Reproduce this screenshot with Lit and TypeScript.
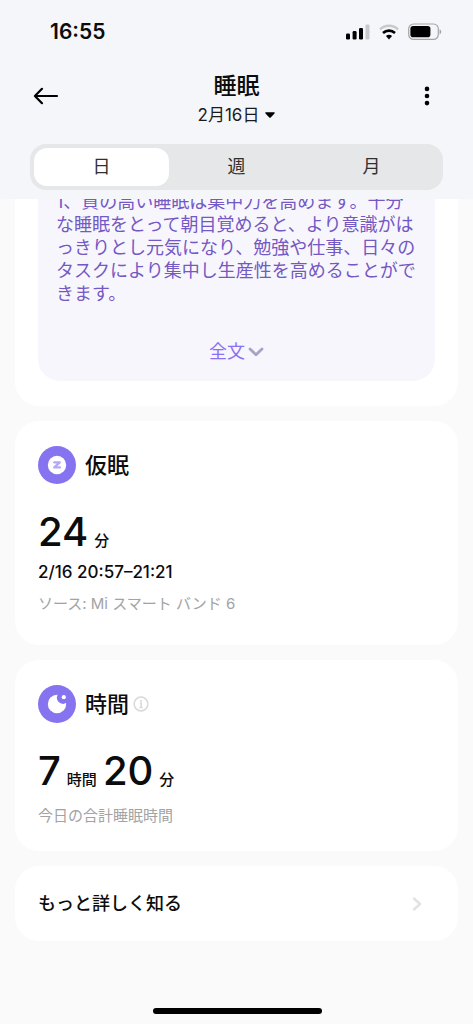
import { LitElement, html, css, svg } from "lit";
import { customElement, state } from "lit/decorators.js";

const TABS = ["日", "週", "月"];

@customElement("app-root")
export class AppRoot extends LitElement {
  @state() private active = 0;

  static styles = css`
    :host {
      display: flex;
      flex-direction: column;
      min-height: 100vh;
      background: #fafafa;
      color: #0c0c0d;
      font-family: Inter, "Noto Sans CJK JP", sans-serif;
      -webkit-font-smoothing: antialiased;
    }
    * {
      box-sizing: border-box;
    }
    button {
      border: 0;
      padding: 0;
      margin: 0;
      background: none;
      color: inherit;
      font: inherit;
      cursor: pointer;
    }
    svg {
      display: block;
    }
    h1,
    h2,
    p {
      margin: 0;
    }
    .header {
      position: sticky;
      top: 0;
      z-index: 1;
      background: #f5f6f9;
      padding-bottom: 9px;
    }
    .status {
      display: flex;
      align-items: center;
      justify-content: space-between;
      height: 64px;
      padding: 0 31px 0 50px;
    }
    .time {
      font-size: 21px;
      line-height: 24px;
      font-weight: 600;
    }
    .signals {
      display: flex;
      align-items: center;
      gap: 9px;
    }
    .bar {
      display: grid;
      grid-template-columns: 32px 1fr 32px;
      align-items: center;
      height: 64px;
      padding: 0 30px;
    }
    .icon {
      display: grid;
      place-items: center;
      height: 32px;
    }
    .heading {
      display: flex;
      flex-direction: column;
      align-items: center;
      padding-top: 5px;
    }
    .title {
      font-size: 23px;
      line-height: 32px;
      font-weight: 500;
    }
    .date {
      display: flex;
      align-items: center;
      gap: 6px;
      font-size: 17px;
      line-height: 26px;
      color: #1b1b1c;
    }
    .tabs {
      display: grid;
      grid-template-columns: repeat(3, 1fr);
      height: 46px;
      margin: 16px 30px 0;
      padding: 4px;
      border-radius: 16px;
      background: #e6e7e8;
    }
    .tab {
      border-radius: 13px;
      font-size: 18px;
      line-height: 24px;
      color: #303031;
    }
    .tab.on {
      background: #fff;
    }
    .main {
      display: flex;
      flex-direction: column;
      gap: 15px;
      margin-top: -9px;
      padding: 0 15px 84px;
    }
    .card {
      border-radius: 24px;
      background: #fff;
      padding: 23px;
    }
    .card.first {
      padding-top: 0;
      padding-bottom: 25px;
      border-top-left-radius: 0;
      border-top-right-radius: 0;
    }
    .advice {
      display: flex;
      flex-direction: column;
      align-items: center;
      gap: 35px;
      padding: 0 18px 17px;
      border-radius: 0 0 22px 22px;
      background: #f7f6fd;
    }
    .text {
      align-self: stretch;
      font-size: 18px;
      line-height: 23px;
      color: #7458c4;
    }
    .more {
      display: flex;
      align-items: center;
      gap: 3px;
      font-size: 18px;
      line-height: 24px;
      color: #8b6ff5;
    }
    .name {
      display: flex;
      align-items: center;
      gap: 9px;
      height: 38px;
      margin-top: 2px;
    }
    .label {
      display: flex;
      align-items: center;
      gap: 4px;
    }
    .label h2 {
      font-size: 22px;
      line-height: 32px;
      font-weight: 500;
    }
    .value {
      display: flex;
      align-items: baseline;
      gap: 6px;
      margin-top: 27px;
    }
    .number {
      font-size: 40px;
      line-height: 42px;
      font-weight: 500;
    }
    .unit {
      font-size: 15px;
      line-height: 20px;
      font-weight: 500;
    }
    .range {
      margin-top: 7px;
      font-size: 17px;
      line-height: 24px;
      font-weight: 500;
    }
    .note {
      margin-top: 8px;
      font-size: 15px;
      line-height: 24px;
      color: #a3a3a4;
    }
    .value + .note {
      margin-top: 12px;
    }
    .nap {
      padding-bottom: 29px;
    }
    .link {
      display: flex;
      align-items: center;
      justify-content: space-between;
      padding: 25px 35px 25px 23px;
      font-size: 18px;
      line-height: 25px;
      font-weight: 500;
      color: inherit;
      text-decoration: none;
    }
    .home {
      position: fixed;
      left: 50%;
      bottom: 10px;
      z-index: 2;
      width: 169px;
      height: 6px;
      margin-left: -84px;
      border-radius: 3px;
      background: #000;
    }
  `;

  private signals() {
    return html`<div class="signals">
      <svg width="24" height="16" viewBox="0 0 24 16" aria-hidden="true">
        <rect x="0" y="9.5" width="4" height="6" rx="1.3" />
        <rect x="6.6" y="7" width="4" height="8.5" rx="1.3" />
        <rect x="13" y="4" width="4" height="11.5" rx="1.3" />
        <rect x="19.5" y="0.5" width="4" height="15" rx="1.3" fill="#c8c9cb" />
      </svg>
      <svg width="20" height="16" viewBox="0 0 20 16" fill="none" stroke-width="2.6" aria-hidden="true">
        <path d="M1 5.4a13 13 0 0 1 18 0" stroke="#c8c9cb" />
        <path d="M4 9a8.8 8.8 0 0 1 12 0" stroke="#000" />
        <path d="M10 15.4 6.9 12.1a4.6 4.6 0 0 1 6.2 0z" fill="#000" />
      </svg>
      <svg width="34" height="18" viewBox="0 0 34 18" aria-hidden="true">
        <rect x="0.7" y="1" width="29.6" height="15.4" rx="4.8" fill="none" stroke="#a4a5a7" stroke-width="1.2" />
        <rect x="2.4" y="3" width="20" height="11.2" rx="2.8" />
        <path d="M31.6 6.2v5.2c1-.4 1.7-1.4 1.7-2.6s-.7-2.2-1.7-2.6z" fill="#a4a5a7" />
      </svg>
    </div>`;
  }

  private badge(shape: unknown) {
    return html`<svg width="38" height="38" viewBox="0 0 38 38" aria-hidden="true">
      <circle cx="19" cy="19" r="19" fill="#8573f0" />
      ${shape}
    </svg>`;
  }

  render() {
    return html`
      <header class="header">
        <div class="status">
          <span class="time">16:55</span>
          ${this.signals()}
        </div>
        <div class="bar">
          <button class="icon" aria-label="戻る">
            <svg width="26" height="18" viewBox="0 0 26 18" fill="none" stroke="#000" stroke-width="2.2" stroke-linecap="round" stroke-linejoin="round">
              <path d="M24 9H2M9 1.8 1.9 9 9 16.2" />
            </svg>
          </button>
          <div class="heading">
            <h1 class="title">睡眠</h1>
            <button class="date">
              <span>2月16日</span>
              <svg width="10" height="6" viewBox="0 0 10 6" aria-hidden="true">
                <path d="M1 .3h8c.7 0 1 .7.5 1.2L5.7 5.5c-.4.4-1 .4-1.4 0L.5 1.5C0 1 .3.3 1 .3z" />
              </svg>
            </button>
          </div>
          <button class="icon" aria-label="メニュー">
            <svg width="6" height="20" viewBox="0 0 6 20">
              <circle cx="3" cy="2.9" r="2.3" />
              <circle cx="3" cy="10" r="2.3" />
              <circle cx="3" cy="17.1" r="2.3" />
            </svg>
          </button>
        </div>
        <div class="tabs" role="tablist">
          ${TABS.map(
            (t, i) => html`<button
              class="tab ${i === this.active ? "on" : ""}"
              role="tab"
              aria-selected=${i === this.active}
              @click=${() => (this.active = i)}
            >${t}</button>`
          )}
        </div>
      </header>
      <main class="main">
        <section class="card first">
          <div class="advice">
            <p class="text">1、質の高い睡眠は集中力を高めます。十分な睡眠をとって朝目覚めると、より意識がはっきりとし元気になり、勉強や仕事、日々のタスクにより集中し生産性を高めることができます。</p>
            <button class="more">
              <span>全文</span>
              <svg width="16" height="10" viewBox="0 0 16 10" fill="none" stroke="#a9a2c4" stroke-width="2.8" stroke-linecap="round" stroke-linejoin="round" aria-hidden="true">
                <path d="M2 2l6 5.800L14 2" />
              </svg>
            </button>
          </div>
        </section>
        <section class="card nap">
          <div class="name">
            ${this.badge(svg`
              <circle cx="19" cy="19" r="9.2" fill="#fff"/>
              <path d="M16.200 16.400h5.600l-5.600 5h5.800" fill="none" stroke="#b5a8f8" stroke-width="2.2" stroke-linecap="round" stroke-linejoin="round"/>`)}
            <div class="label"><h2>仮眠</h2></div>
          </div>
          <p class="value"><span class="number">24</span><span class="unit">分</span></p>
          <p class="range">2/16 20:57–21:21</p>
          <p class="note">ソース: Mi スマート バンド 6</p>
        </section>
        <section class="card">
          <div class="name">
            ${this.badge(svg`
              <circle cx="19" cy="19" r="9.2" fill="#fff"/>
              <circle cx="25" cy="12.7" r="6.2" fill="#8573f0"/>
              <circle cx="25.8" cy="12.2" r="2.1" fill="#fff"/>`)}
            <div class="label">
              <h2>時間</h2>
              <button aria-label="情報">
                <svg width="16" height="16" viewBox="0 0 16 16" fill="none" stroke="#d9d9d9" stroke-width="1.5">
                  <circle cx="8" cy="8" r="6.9" />
                  <path d="M6.8 7.3H8.2V11.5M6.4 11.500h3.400" />
                  <circle cx="8" cy="4.9" r="1" fill="#d9d9d9" stroke="none" />
                </svg>
              </button>
            </div>
          </div>
          <p class="value">
            <span class="number">7</span><span class="unit">時間</span><span class="number">20</span><span class="unit">分</span>
          </p>
          <p class="note">今日の合計睡眠時間</p>
        </section>
        <a class="card link" href="#">
          <span>もっと詳しく知る</span>
          <svg width="12" height="16" viewBox="0 0 12 16" fill="none" stroke="#e2e2e2" stroke-width="2.4" stroke-linecap="round" stroke-linejoin="round" aria-hidden="true">
            <path d="M3 2.500l6 5.500-6 5.500" />
          </svg>
        </a>
      </main>
      <div class="home"></div>
    `;
  }
}
